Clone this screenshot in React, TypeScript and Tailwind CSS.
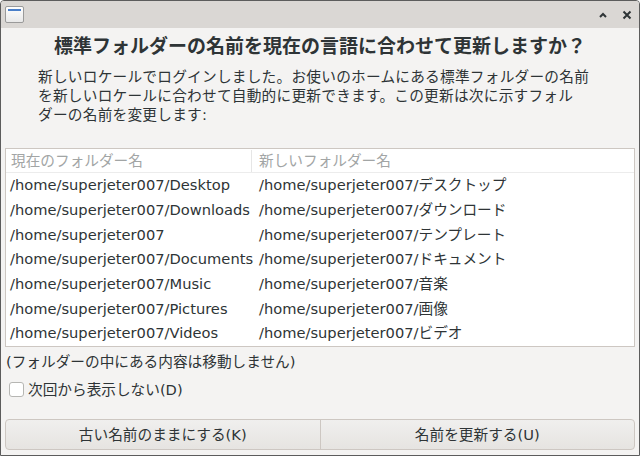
import React from "react"

const font = { fontFamily: '"DejaVu Sans", "Noto Sans CJK JP", sans-serif' }

const rows: [string, string][] = [
  ["/home/superjeter007/Desktop", "/home/superjeter007/デスクトップ"],
  ["/home/superjeter007/Downloads", "/home/superjeter007/ダウンロード"],
  ["/home/superjeter007", "/home/superjeter007/テンプレート"],
  ["/home/superjeter007/Documents", "/home/superjeter007/ドキュメント"],
  ["/home/superjeter007/Music", "/home/superjeter007/音楽"],
  ["/home/superjeter007/Pictures", "/home/superjeter007/画像"],
  ["/home/superjeter007/Videos", "/home/superjeter007/ビデオ"],
]

export default function App() {
  return (
    <div
      style={font}
      className="flex h-[456px] w-[640px] flex-col overflow-hidden rounded-t-[4px] border border-[#5c5c5c] bg-[#f4f3f2] text-[14.67px] text-[#2e3436]"
    >
      {/* Title bar */}
      <div className="flex h-[27px] shrink-0 items-center justify-between bg-[#dad7d4] pl-[4px] pr-[7px]">
        <div className="h-[17px] w-[19px] rounded-[2px] border border-[#9a9a9a] bg-gradient-to-b from-white to-[#e8e8e8]">
          <div className="mx-[2px] mt-[2px] h-[2px] bg-[#4a7fc9]" />
        </div>
        <div className="flex items-center gap-[14px]">
          <svg width="10" height="10" viewBox="0 0 10 10">
            <path d="M2 7 L5 4 L8 7" fill="none" stroke="#2e3436" strokeWidth="2" />
          </svg>
          <svg width="10" height="10" viewBox="0 0 10 10">
            <path d="M1.5 1.5 L8.5 8.5 M8.5 1.5 L1.5 8.5" stroke="#2e3436" strokeWidth="2" />
          </svg>
        </div>
      </div>

      {/* Body */}
      <div className="flex flex-1 flex-col px-[4px]">
        <h1 className="mt-[5px] text-center text-[19px] font-bold leading-[26px]">
          標準フォルダーの名前を現在の言語に合わせて更新しますか？
        </h1>
        <p className="mt-[8px] whitespace-nowrap pl-[33px] leading-[19px] tracking-[0.25px]">
          新しいロケールでログインしました。お使いのホームにある標準フォルダーの名前
          <br />
          を新しいロケールに合わせて自動的に更新できます。この更新は次に示すフォル
          <br />
          ダーの名前を変更します:
        </p>

        <div className="mt-[24px] border border-[#cdc7c2] bg-white">
          <div className="flex h-[24px] items-center border-b border-[#ececec] text-[#a2a5a5]">
            <div className="w-[246px] border-r border-[#e6e6e6] pl-[5px]">現在のフォルダー名</div>
            <div className="pl-[7px]">新しいフォルダー名</div>
          </div>
          {rows.map(([a, b]) => (
            <div key={a} className="flex h-[24.7px] items-center">
              <div className="w-[246px] whitespace-nowrap pl-[4px]">{a}</div>
              <div className="whitespace-nowrap pl-[7px]">{b}</div>
            </div>
          ))}
        </div>

        <div className="mt-[5px] pl-[1px] leading-[20px]">(フォルダーの中にある内容は移動しません)</div>
        <label className="mt-[8px] flex items-center gap-[4px] pl-[4px]">
          <span className="h-[15px] w-[15px] rounded-[3px] border border-[#b6b6b3] bg-white" />
          <span className="leading-[20px]">次回から表示しない(D)</span>
        </label>

        <div className="mt-auto mb-[5px] flex h-[31px] rounded-[4px] border border-[#cdc7c2] bg-gradient-to-b from-[#f0efee] to-[#e6e4e1]">
          <button className="flex-1 border-r border-[#cdc7c2]">古い名前のままにする(K)</button>
          <button className="flex-1">名前を更新する(U)</button>
        </div>
      </div>
    </div>
  )
}
